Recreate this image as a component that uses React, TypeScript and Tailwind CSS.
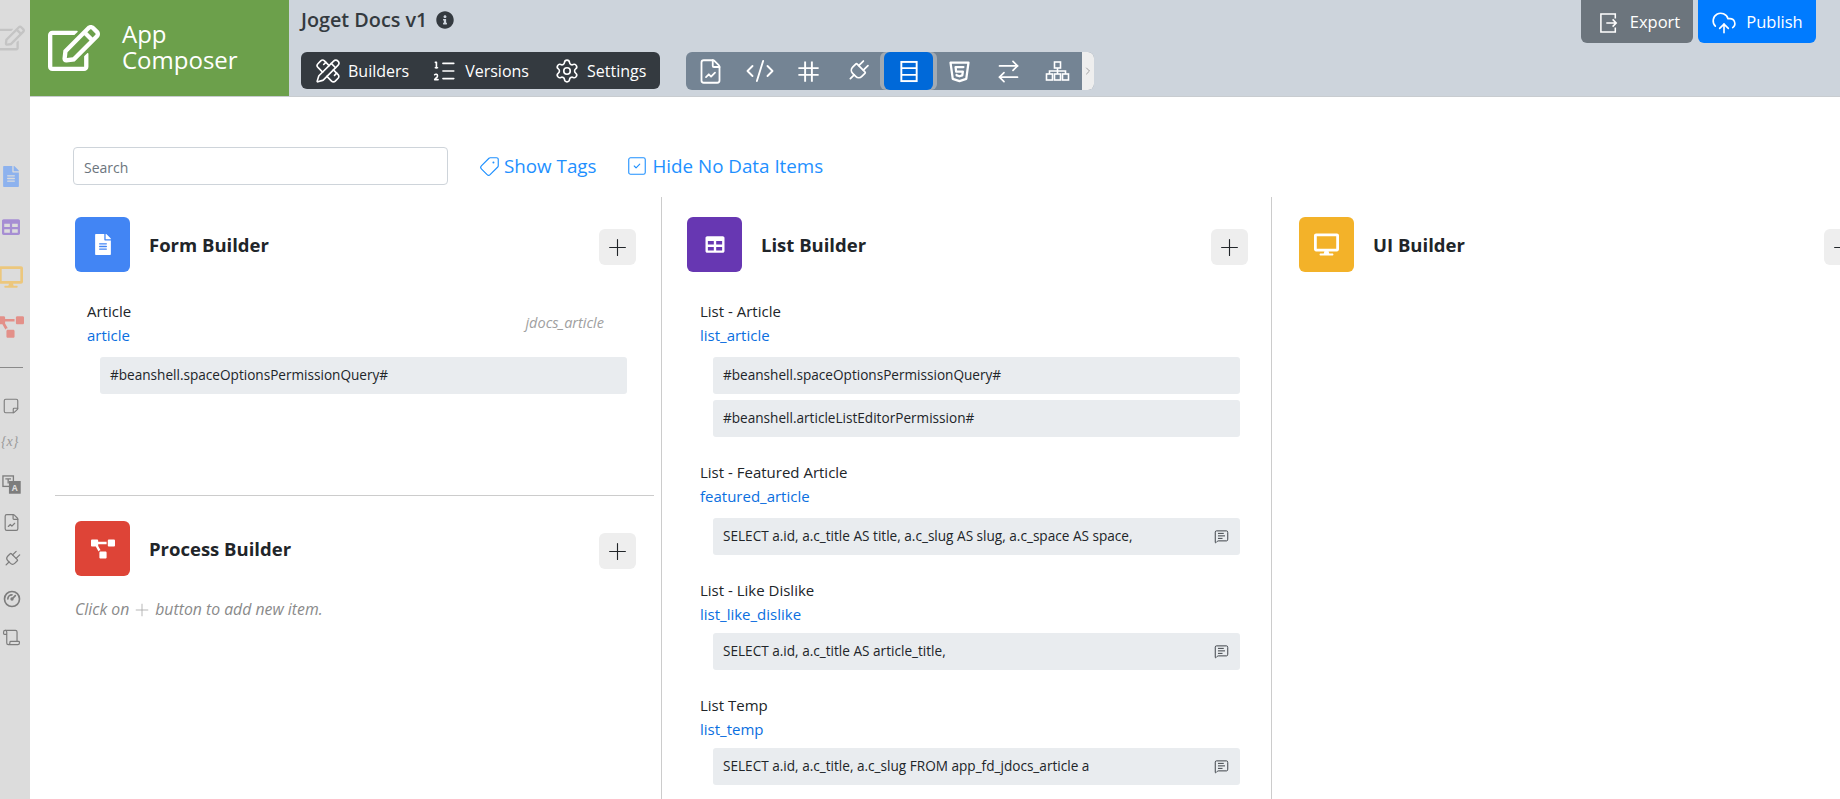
import React from 'react';
import {
    ArrowRightLeft,
    ChevronRight,
    CloudUpload,
    CodeXml,
    FileChartLine,
    ListOrdered,
    MessageSquareText,
    PencilRuler,
    Plug,
    Plus,
    Scroll,
    Settings,
    SquareCheck,
    StickyNote,
    Tag,
} from 'lucide-react';
import { FaDesktop, FaFileAlt, FaInfoCircle, FaProjectDiagram, FaRegEdit, FaTable } from 'react-icons/fa';
import { TbBrandHtml5, TbGauge } from 'react-icons/tb';

type IconProps = { className?: string; strokeWidth?: number };

const RowsIcon = ({ className }: IconProps) => (
    <svg viewBox="0 0 20 24" className={className} fill="none" stroke="currentColor" strokeWidth="2">
        <rect x="2" y="2" width="16" height="20" />
        <path d="M2 8.5h16M2 15.5h16" />
    </svg>
);

const ExportIcon = ({ className }: IconProps) => (
    <svg viewBox="0 0 20 22" className={className} fill="none" stroke="currentColor" strokeWidth="1.7">
        <path d="M17 6V1H1v20h16v-5" />
        <path d="M7 11h11M14 7l4 4-4 4" />
    </svg>
);

const GridIcon = ({ className }: IconProps) => (
    <svg viewBox="0 0 24 24" className={className} fill="none" stroke="currentColor" strokeWidth="1.7">
        <path d="M9 3v18M15 3v18M3 9h18M3 15h18" />
    </svg>
);

const SitemapIcon = ({ className }: IconProps) => (
    <svg viewBox="0 0 26 24" className={className} fill="none" stroke="currentColor" strokeWidth="1.6">
        <rect x="10" y="3" width="6" height="6" />
        <rect x="2" y="15" width="6" height="6" />
        <rect x="10" y="15" width="6" height="6" />
        <rect x="18" y="15" width="6" height="6" />
        <path d="M13 9v6M5 15v-3h16v3" />
    </svg>
);

const TranslateIcon = ({ className }: IconProps) => (
    <svg viewBox="0 0 20 20" className={className} fill="none" stroke="currentColor" strokeWidth="1.4">
        <rect x="1" y="1" width="11" height="11" />
        <rect x="8" y="7" width="11" height="12" fill="currentColor" />
        <path d="M3.5 4h6M6.5 4v5" />
        <text x="13.5" y="17" textAnchor="middle" fontSize="9" fontWeight="700" fill="#dcdcdc" stroke="none">A</text>
    </svg>
);

const topTabs = [
    { label: 'Builders', icon: PencilRuler, cls: 'ml-[14px]', gap: 'ml-[7px]' },
    { label: 'Versions', icon: ListOrdered, cls: 'ml-[22px]', gap: 'ml-[8px]' },
    { label: 'Settings', icon: Settings, cls: 'ml-[25px]', gap: 'ml-[7px]' },
];

const ToolCell = ({ children }: { children: React.ReactNode }) => (
    <div className="flex h-full w-[49px] items-center justify-center">{children}</div>
);

const Sidebar = () => (
    <div className="flex h-full w-[30px] shrink-0 flex-col overflow-hidden bg-[#dcdcdc]">
        <FaRegEdit className="mt-[24px] ml-[-3px] size-[28px] shrink-0 text-[#c4c4c4]" />
        <FaFileAlt className="mt-[114px] ml-[3px] h-[21px] w-[16px] shrink-0 text-[#8db2ee]" />
        <FaTable className="mt-[31px] ml-[1px] h-[18px] w-[20px] shrink-0 text-[#a68ed3]" />
        <FaDesktop className="mt-[30px] ml-[-1px] h-[22px] w-[24px] shrink-0 text-[#ecc77d]" />
        <FaProjectDiagram className="mt-[28px] ml-[-3px] h-[22px] w-[27px] shrink-0 text-[#e39089]" />
        <div className="mt-[29px] h-px w-[23px] shrink-0 bg-[#8a8a8a]" />
        <StickyNote className="mt-[29px] ml-[2px] size-[18px] shrink-0 -scale-y-100 text-[#7d7d7d]" strokeWidth={1.5} />
        <span className="mt-[17px] ml-[1px] text-[14px] leading-[20px] italic text-[#9a9a9a] font-['Liberation_Serif',serif]">{'{x}'}</span>
        <TranslateIcon className="mt-[23px] ml-[2px] size-[19px] shrink-0 text-[#7d7d7d]" />
        <FileChartLine className="mt-[19px] ml-[2px] size-[19px] shrink-0 text-[#7d7d7d]" strokeWidth={1.5} />
        <Plug className="mt-[17px] ml-[2px] size-[20px] shrink-0 rotate-45 text-[#7d7d7d]" strokeWidth={1.5} />
        <TbGauge className="mt-[20px] ml-[2px] size-[20px] shrink-0 text-[#7d7d7d]" />
        <Scroll className="mt-[19px] ml-[2px] size-[19px] shrink-0 text-[#7d7d7d]" strokeWidth={1.5} />
    </div>
);

const Header = () => (
    <div className="flex h-[97px] shrink-0 border-b border-[#c8ccd0] bg-[#cdd4dc]">
        <div className="flex w-[259px] shrink-0 items-center bg-[#6ca04b] text-white">
            <FaRegEdit className="ml-[18px] size-[52px] shrink-0" />
            <div className="ml-[22px] mb-[2px] text-[24px] leading-[26px]">
                App
                <br />
                Composer
            </div>
        </div>
        <div className="ml-3 flex flex-col">
            <div className="mt-[8px] flex h-6 items-center text-[#343a40]">
                <span className="text-[19.8px] font-semibold">Joget Docs v1</span>
                <FaInfoCircle className="ml-[9px] size-[18px]" />
            </div>
            <div className="mt-[20px] flex">
                <div className="flex h-[37px] w-[359px] items-center rounded-md bg-[#343a40] text-white">
                    {topTabs.map((tab) => (
                        <div key={tab.label} className={`flex items-center ${tab.cls}`}>
                            <tab.icon className="size-[26px]" strokeWidth={1.5} />
                            <span className={`text-[16px] ${tab.gap}`}>{tab.label}</span>
                        </div>
                    ))}
                </div>
                <div className="ml-[26px] flex h-[38px] items-center rounded-md bg-[#748494] text-white">
                    <ToolCell><FileChartLine className="size-[27px]" strokeWidth={1.6} /></ToolCell>
                    <ToolCell><CodeXml className="size-[30px]" strokeWidth={1.5} /></ToolCell>
                    <ToolCell><GridIcon className="size-[27px]" /></ToolCell>
                    <ToolCell><Plug className="size-[26px] rotate-45" strokeWidth={1.6} /></ToolCell>
                    <div className="mx-[-2px] h-full w-[57px] rounded-md bg-[#a2aab2] px-1">
                        <div className="flex h-full items-center justify-center rounded-md bg-[#0069d9]">
                            <RowsIcon className="h-[23px] w-[20px]" />
                        </div>
                    </div>
                    <ToolCell><TbBrandHtml5 className="size-[27px]" /></ToolCell>
                    <ToolCell><ArrowRightLeft className="size-[27px]" strokeWidth={1.5} /></ToolCell>
                    <ToolCell><SitemapIcon className="h-[24px] w-[27px]" /></ToolCell>
                    <div className="flex h-full w-3 items-center justify-center rounded-r-md bg-[#eeeeee] text-[#a0a0a0]">
                        <ChevronRight className="size-3 shrink-0" />
                    </div>
                </div>
            </div>
        </div>
        <div className="ml-auto mr-6 flex h-[43px] gap-[5px] text-white">
            <div className="flex w-[112px] items-center justify-center gap-[12px] rounded-b-md bg-[#6c757d] pl-[6px] pt-[2px] text-[16.5px]">
                <ExportIcon className="h-[20px] w-[18px]" />
                Export
            </div>
            <div className="flex w-[118px] items-center justify-center gap-[9px] rounded-b-md bg-[#007bff] pt-[2px] text-[16.5px]">
                <CloudUpload className="size-[26px]" strokeWidth={1.5} />
                Publish
            </div>
        </div>
    </div>
);

const SectionHead = ({ title, color, icon: Icon, iconCls }: { title: string; color: string; icon: any; iconCls: string }) => (
    <div className="flex items-start">
        <div className={`flex size-[55px] shrink-0 items-center justify-center rounded-md text-white ${color}`}>
            <Icon className={iconCls} />
        </div>
        <div className="ml-[19px] flex h-[55px] items-center text-[18.5px] font-bold text-[#212529]">{title}</div>
        <div className="ml-auto mr-px mt-3 flex h-9 w-[37px] shrink-0 items-center justify-center rounded-md bg-[#eeeeee] text-[#212529]">
            <Plus className="size-[27px]" strokeWidth={1} />
        </div>
    </div>
);

interface Entry {
    name: string;
    id: string;
    table?: string;
    rules: string[];
    comment?: boolean;
    tight?: boolean;
}

const Item = ({ entry }: { entry: Entry }) => (
    <div className="ml-[13px] mr-[9px] mb-[23px]">
        <div className="flex items-center justify-between pr-[23px]">
            <div>
                <div className="h-6 text-[15px] leading-6 text-[#212529]">{entry.name}</div>
                <div className="h-6 text-[15px] leading-6 text-[#0b6fe0]">{entry.id}</div>
            </div>
            {entry.table && <span className="text-[14.5px] italic text-[#a0a0a0]">{entry.table}</span>}
        </div>
        <div className={`ml-[13px] flex flex-col gap-[6px] ${entry.tight ? 'mt-[7px]' : 'mt-[10px]'}`}>
            {entry.rules.map((rule) => (
                <div key={rule} className="flex h-[37px] items-center justify-between rounded-[3px] bg-[#e9ecef] pl-[10px] pr-[11px] text-[13.6px] text-[#212529]">
                    {rule}
                    {entry.comment && <MessageSquareText className="size-[15px] text-[#343a40]" strokeWidth={1.5} />}
                </div>
            ))}
        </div>
    </div>
);

const listEntries: Entry[] = [
    { name: 'List - Article', id: 'list_article', rules: ['#beanshell.spaceOptionsPermissionQuery#', '#beanshell.articleListEditorPermission#'] },
    { name: 'List - Featured Article', id: 'featured_article', rules: ['SELECT a.id, a.c_title AS title, a.c_slug AS slug, a.c_space AS space,'], comment: true },
    { name: 'List - Like Dislike', id: 'list_like_dislike', rules: ['SELECT a.id, a.c_title AS article_title,'], comment: true, tight: true },
    { name: 'List Temp', id: 'list_temp', rules: ['SELECT a.id, a.c_title, a.c_slug FROM app_fd_jdocs_article a'], comment: true, tight: true },
];

export default function App() {
    return (
        <div className="flex h-[799px] w-[1840px] overflow-hidden bg-white font-['Open_Sans',sans-serif]">
            <Sidebar />
            <div className="flex min-w-0 flex-1 flex-col">
                <Header />
                <div className="ml-[43px] mt-[50px] flex h-[38px] items-center text-[18.8px] text-[#1e90ff]">
                    <div className="flex h-[38px] w-[375px] items-center rounded border border-[#ced4da] pl-[10px] pt-[2px] text-[14px] text-[#6c757d]">Search</div>
                    <Tag className="ml-[31px] size-[21px] rotate-90" strokeWidth={1.3} />
                    <span className="ml-[4px]">Show Tags</span>
                    <SquareCheck className="ml-[30px] size-[22px]" strokeWidth={1.2} />
                    <span className="ml-[4px]">Hide No Data Items</span>
                </div>
                <div className="ml-[25px] mt-3 flex min-h-0 flex-1">
                    <div className="h-full w-[607px] shrink-0 border-r border-[#cccccc]">
                        <div className="h-[298px] pl-5 pr-6 pt-5">
                            <SectionHead title="Form Builder" color="bg-[#4285f4]" icon={FaFileAlt} iconCls="h-[21px] w-4" />
                            <div className="mt-[27px] -ml-px mr-px">
                                <Item entry={{ name: 'Article', id: 'article', table: 'jdocs_article', rules: ['#beanshell.spaceOptionsPermissionQuery#'] }} />
                            </div>
                        </div>
                        <div className="mr-[7px] border-t border-[#cccccc] pl-5 pr-[17px] pt-[25px]">
                            <SectionHead title="Process Builder" color="bg-[#de4437]" icon={FaProjectDiagram} iconCls="size-[24px]" />
                            <div className="mt-[23px] flex h-[22px] items-center text-[15.8px] italic text-[#8a8a8a]">
                                Click on
                                <Plus className="mx-[3px] size-[20px] text-[#a8a8a8]" strokeWidth={1} />
                                button to add new item.
                            </div>
                        </div>
                    </div>
                    <div className="h-full w-[610px] shrink-0 border-r border-[#cccccc] pl-[25px] pr-[22px] pt-5">
                        <SectionHead title="List Builder" color="bg-[#6737b2]" icon={FaTable} iconCls="h-[19px] w-[22px]" />
                        <div className="mt-[27px]">
                            {listEntries.map((entry) => (
                                <Item key={entry.id} entry={entry} />
                            ))}
                        </div>
                    </div>
                    <div className="h-full w-[590px] shrink-0 pl-[27px] pt-5">
                        <SectionHead title="UI Builder" color="bg-[#f3b229]" icon={FaDesktop} iconCls="h-[23px] w-[25px]" />
                    </div>
                </div>
            </div>
        </div>
    );
}
